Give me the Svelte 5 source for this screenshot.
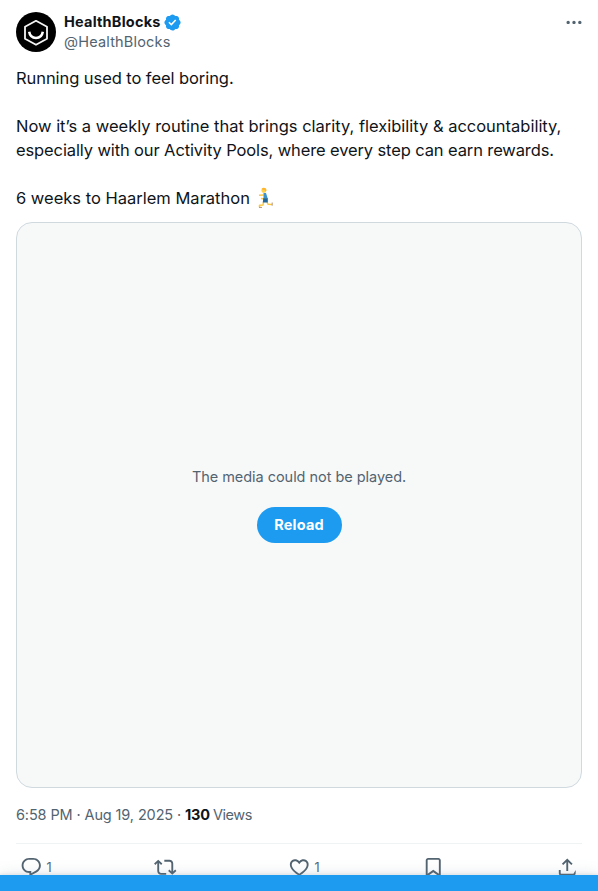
<script>
  const morePath = 'M3 12c0-1.1.9-2 2-2s2 .9 2 2-.9 2-2 2-2-.9-2-2zm9 2c1.1 0 2-.9 2-2s-.9-2-2-2-2 .9-2 2 .9 2 2 2zm7 0c1.1 0 2-.9 2-2s-.9-2-2-2-2 .9-2 2 .9 2 2 2z';
  const verifiedPath = 'M20.396 11c-.018-.646-.215-1.275-.57-1.816-.354-.54-.852-.972-1.438-1.246.223-.607.27-1.264.14-1.897-.131-.634-.437-1.218-.882-1.687-.47-.445-1.053-.75-1.687-.882-.633-.13-1.29-.083-1.897.14-.273-.587-.704-1.086-1.245-1.44S11.647 1.62 11 1.604c-.646.017-1.273.213-1.813.568s-.969.854-1.24 1.44c-.608-.223-1.267-.272-1.902-.14-.635.13-1.22.436-1.69.882-.445.47-.749 1.055-.878 1.688-.13.633-.08 1.29.144 1.896-.587.274-1.087.705-1.443 1.245-.356.54-.555 1.17-.574 1.817.02.647.218 1.276.574 1.817.356.54.856.972 1.443 1.245-.224.606-.274 1.263-.144 1.896.13.634.433 1.218.877 1.688.47.443 1.054.747 1.687.878.633.132 1.29.084 1.897-.136.274.586.705 1.084 1.246 1.439.54.354 1.17.551 1.816.569.647-.016 1.276-.213 1.817-.567s.972-.854 1.245-1.44c.604.239 1.266.296 1.903.164.636-.132 1.22-.447 1.68-.907.46-.46.776-1.044.908-1.681s.075-1.299-.165-1.903c.586-.274 1.084-.705 1.439-1.246.354-.54.551-1.17.569-1.816zM9.662 14.85l-3.429-3.428 1.293-1.302 2.072 2.072 4.4-4.794 1.347 1.246z';
  const actions = [
    { name: 'Reply', count: 1, path: 'M1.751 10c0-4.42 3.584-8 8.005-8h4.366c4.49 0 8.129 3.64 8.129 8.13 0 2.96-1.607 5.68-4.196 7.11l-8.054 4.46v-3.69h-.067c-4.49.1-8.183-3.51-8.183-8.01zm8.005-6c-3.317 0-6.005 2.69-6.005 6 0 3.37 2.77 6.08 6.138 6.01l.351-.01h1.761v2.3l5.087-2.81c1.951-1.08 3.163-3.13 3.163-5.36 0-3.39-2.744-6.13-6.129-6.13H9.756z' },
    { name: 'Repost', path: 'M4.5 3.88l4.432 4.14-1.364 1.46L5.5 7.55V16c0 1.1.896 2 2 2H13v2H7.5c-2.209 0-4-1.79-4-4V7.55L1.432 9.48.068 8.02 4.5 3.88zM16.5 6H11V4h5.5c2.209 0 4 1.79 4 4v8.45l2.068-1.93 1.364 1.46-4.432 4.14-4.432-4.14 1.364-1.46 2.068 1.93V8c0-1.1-.896-2-2-2z' },
    { name: 'Like', count: 1, path: 'M16.697 5.5c-1.222-.06-2.679.51-3.89 2.16l-.805 1.09-.806-1.09C9.984 6.01 8.526 5.44 7.304 5.5c-1.243.07-2.349.78-2.91 1.91-.552 1.12-.633 2.78.479 4.82 1.074 1.97 3.257 4.27 7.129 6.61 3.87-2.34 6.052-4.64 7.126-6.61 1.111-2.04 1.03-3.7.477-4.82-.561-1.13-1.666-1.84-2.908-1.91zm4.187 7.69c-1.351 2.48-4.001 5.12-8.379 7.67l-.503.3-.504-.3c-4.379-2.55-7.029-5.19-8.382-7.67-1.36-2.5-1.41-4.86-.514-6.67.887-1.79 2.647-2.91 4.601-3.01 1.651-.09 3.368.56 4.798 2.01 1.429-1.45 3.146-2.1 4.796-2.01 1.954.1 3.714 1.22 4.601 3.01.896 1.81.846 4.17-.514 6.67z' },
    { name: 'Bookmark', path: 'M4 4.5C4 3.12 5.119 2 6.5 2h11C18.881 2 20 3.12 20 4.5v18.44l-8-5.71-8 5.71V4.5zM6.5 4c-.276 0-.5.22-.5.5v14.56l6-4.29 6 4.29V4.5c0-.28-.224-.5-.5-.5h-11z' },
    { name: 'Share', path: 'M12 2.59l5.7 5.7-1.41 1.42L13 6.41V16h-2V6.41l-3.3 3.3-1.41-1.42L12 2.59zM21 15l-.02 3.51c0 1.38-1.12 2.49-2.5 2.49H5.5C4.11 21 3 19.88 3 18.5V15h2v3.5c0 .28.22.5.5.5h12.98c.28 0 .5-.22.5-.5L21 15z' }
  ];
</script>

<main>
  <header>
    <svg class="avatar" viewBox="0 0 40 40">
      <circle cx="20" cy="20" r="20" fill="#000" />
      <path d="M20 8.800 31 14.800v12L20 32.800 9 26.800v-12Z" fill="none" stroke="#f4f4f4" stroke-width="1.800" stroke-linejoin="round" />
      <path d="M13.200 19.800c.6 4 3.400 6.100 6.800 6.100s6.200-2.100 6.800-6.100" fill="none" stroke="#fff" stroke-width="2.500" />
    </svg>
    <div class="who">
      <div class="name"><b>HealthBlocks</b><svg viewBox="0 0 22 22"><path fill="#1d9bf0" d={verifiedPath} /></svg></div>
      <div class="handle"><span>@HealthBlocks</span></div>
    </div>
    <svg class="more" viewBox="0 0 24 24"><path fill="#536471" d={morePath} /></svg>
  </header>

  <section class="post">
    <p><span class="l1">Running used to feel boring.</span></p>
    <p class="gap"><span class="l2">Now it’s a weekly routine that brings clarity, flexibility &amp; accountability,</span></p>
    <p><span class="l3">especially with our Activity Pools, where every step can earn rewards.</span></p>
    <p class="gap last"><span class="l4">6 weeks to Haarlem Marathon</span>
      <svg class="runner" viewBox="0 0 20 22">
        <path d="M8.500 8 4 8.300M6 11.500l2.500.3M8.500 15 8 18 4.500 18.200v2M12 15l1 2.200 4 .4" fill="none" stroke="#ffc83d" stroke-width="1.500" stroke-linejoin="round" />
        <path d="M4 20.400h3M17.200 15.500v3.200" stroke="#b39177" stroke-width="1" />
        <path d="M8.500 6H11l1.800 5.700H8.500Z" fill="#3c94ca" />
        <path d="M8.200 11.200h4.600v4.200H7.800Z" fill="#226699" />
        <circle cx="8.800" cy="3.500" r="2.400" fill="#ffd24d" />
        <path d="M6.500 2.200C7.800.2 11.200.3 11.500 3.200l-.8 1.500-1-1.500Z" fill="#ffb52e" />
      </svg>
    </p>
  </section>

  <section class="media">
    <div class="message"><span>The media could not be played.</span></div>
    <button><span>Reload</span></button>
  </section>

  <div class="meta"><span class="date">6:58 PM · Aug 19, 2025 ·</span><b>130</b><span class="views">Views</span></div>

  <nav>
    {#each actions as action}
      <div class="action" title={action.name}>
        <svg viewBox="0 0 24 24"><path fill="#536471" d={action.path} /></svg>
        {#if action.count}<span>{action.count}</span>{/if}
      </div>
    {/each}
  </nav>
  <footer></footer>
</main>

<style>
  :global(body) { margin: 0; background: #fff; }
  main { position: relative; box-sizing: border-box; width: 598px; height: 891px; padding: 12px 16px 0; overflow: hidden; background: #fff; color: #0f1419; font-family: Inter, "Liberation Sans", sans-serif; font-size: 14.5px; line-height: 20px; white-space: nowrap; }
  header { display: flex; height: 40px; }
  .avatar { width: 40px; height: 40px; margin-right: 8px; }
  .who { flex: 1; }
  .name { display: flex; align-items: center; height: 20px; }
  .name b { width: 97px; letter-spacing: .22px; }
  .name svg { width: 19px; height: 19px; margin-left: 2px; }
  .handle { color: #536471; letter-spacing: .18px; }
  .more { width: 20px; height: 20px; margin-right: -1.5px; padding-top: .4px; }
  .post { padding-top: 14px; font-size: 16.5px; line-height: 24px; }
  p { margin: 0; height: 24px; }
  .gap { margin-top: 24px; }
  .last { display: flex; align-items: center; }
  .l1 { letter-spacing: -.07px; }
  .l2 { letter-spacing: -.01px; }
  .l3 { letter-spacing: -.12px; }
  .l4 { width: 239px; }
  .runner { width: 20px; height: 22px; }
  .media { box-sizing: border-box; display: flex; flex-direction: column; align-items: center; height: 566px; margin-top: 12px; padding-top: 244px; border: 1px solid #cfd9de; border-radius: 16px; background: #f7f9f9; }
  .message { color: #536471; letter-spacing: -.04px; }
  button { width: 85px; height: 36px; margin-top: 20px; padding: 0; border: 0; border-radius: 18px; background: #1d9bf0; color: #fff; font: 700 14.5px/20px Inter, sans-serif; letter-spacing: .2px; }
  .meta { display: flex; height: 20px; margin-top: 17px; color: #536471; }
  .date { width: 169px; letter-spacing: -.12px; }
  .meta b { width: 28px; color: #0f1419; letter-spacing: -.2px; }
  .views { letter-spacing: -.45px; }
  nav { display: flex; margin-top: 18px; padding: 12px 0 0 4px; border-top: 1px solid #eff3f4; }
  .action { display: flex; flex: 0 0 134px; align-items: center; height: 23px; color: #536471; font-size: 12.5px; }
  .action svg { width: 22.5px; height: 22.5px; flex: none; }
  .action span { margin-left: 4px; }
  footer { position: absolute; left: 0; right: 0; bottom: 0; height: 16px; background: #1d9bf0; box-shadow: 0 0 15px rgba(101,119,134,.2), 0 0 3px 1px rgba(101,119,134,.15); }
</style>
